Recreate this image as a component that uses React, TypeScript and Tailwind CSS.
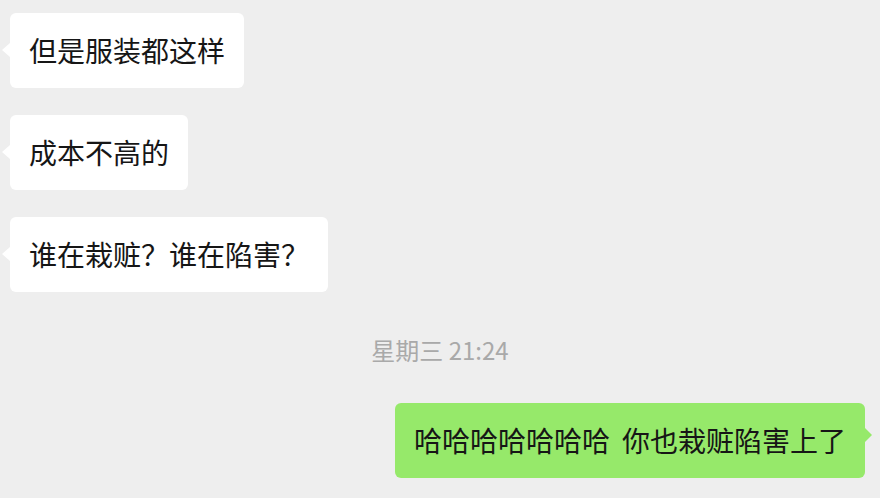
import React from "react";

const font = { fontFamily: '"Noto Sans CJK SC", "Noto Sans", sans-serif' };

function LeftBubble({ text }: { text: string }) {
  return (
    <div className="relative self-start rounded-[6px] bg-white px-[19px] py-[18px] text-[28px] leading-[39px] text-[#161616] whitespace-nowrap">
      <span className="absolute left-[-8px] top-[30px] h-0 w-0 border-y-[7px] border-r-[8px] border-y-transparent border-r-white" />
      {text}
    </div>
  );
}

export default function App() {
  return (
    <div
      className="flex h-[498px] w-[880px] flex-col overflow-hidden bg-[#eeeeee] pl-[10px] pr-[15px] pt-[13px]"
      style={font}
    >
      <div className="flex flex-col gap-[27px]">
        <LeftBubble text="但是服装都这样" />
        <LeftBubble text="成本不高的" />
        <LeftBubble text="谁在栽赃？谁在陷害？" />
      </div>
      <div className="mt-[43px] pl-[5px] text-center text-[24px] leading-[30px] text-[#a9a9a9]">
        星期三 21:24
      </div>
      <div className="relative mt-[38px] self-end rounded-[6px] bg-[#96e96a] px-[19px] py-[18px] text-[28px] leading-[39px] text-[#161616] whitespace-nowrap">
        <span className="absolute right-[-7px] top-[25px] h-0 w-0 border-y-[7px] border-l-[7px] border-y-transparent border-l-[#96e96a]" />
        哈哈哈哈哈哈哈<span className="inline-block w-[12px]" />你也栽赃陷害上了
      </div>
    </div>
  );
}
